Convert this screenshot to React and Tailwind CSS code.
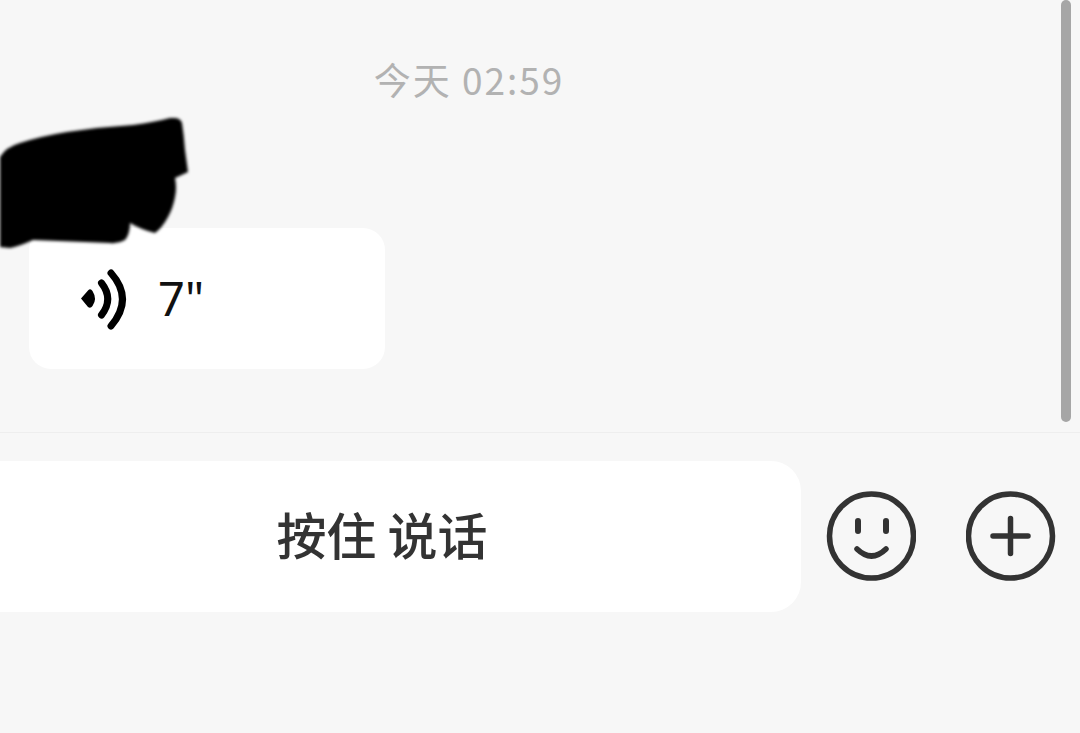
import React from "react";

const cjk = "font-['Noto_Sans_CJK_SC','Liberation_Sans',sans-serif]";

const VoiceIcon = () => (
  <svg width="48" height="62" viewBox="0 0 48 62" fill="none" className="shrink-0">
    <path d="M1 30.5 L8 22.5 Q10.5 20 12.5 23 Q17.5 31 12.5 38 Q10.5 41 8 39 Z" fill="#000" />
    <path d="M21.5 15 Q34 31 21.5 47" stroke="#000" strokeWidth="7" strokeLinecap="round" />
    <path d="M31 5 Q54 31 31 58" stroke="#000" strokeWidth="7" strokeLinecap="round" />
  </svg>
);

const SmileIcon = () => (
  <svg width="90" height="90" viewBox="0 0 90 90" fill="none">
    <circle cx="45.5" cy="45" r="42" stroke="#333" strokeWidth="5.5" />
    <path d="M32 30 V40 M60 30 V40" stroke="#333" strokeWidth="6" strokeLinecap="round" />
    <path d="M31 58 Q45.5 72 60 58" stroke="#333" strokeWidth="5.5" strokeLinecap="round" />
  </svg>
);

const PlusIcon = () => (
  <svg width="90" height="90" viewBox="0 0 90 90" fill="none">
    <circle cx="44.5" cy="45" r="42" stroke="#333" strokeWidth="5.5" />
    <path d="M44.5 27.5 V62.5 M27 45 H62" stroke="#333" strokeWidth="5.5" strokeLinecap="round" />
  </svg>
);

// black marker scribble covering the sender name
const Scribble = () => (
  <svg
    width="192"
    height="136"
    viewBox="0 0 192 136"
    className="absolute left-0 top-[118px] blur-[1.5px]"
  >
    <path
      d="M0 39 Q6 29 20 25 Q42 18 67 14 Q100 9 133 7 Q155 4 170 0 Q180 -1 182 5 Q184 18 185 32 L188 54 L175 60 Q177 70 175 79 Q173 90 168 99 Q162 110 155 115 Q142 112 130 105 Q130 116 125 122 Q118 126 110 125 L33 122 Q20 128 10 130 L0 129 Z"
      fill="#000"
    />
  </svg>
);

export default function App() {
  return (
    <div className={`relative h-[733px] w-[1080px] overflow-hidden bg-[#f7f7f7] ${cjk}`}>
      <div className="h-[433px] border-b border-[#eeeeee] pl-[29px] pt-[56px]">
        <p className="w-[880px] text-center text-[37px] leading-[46px] tracking-[2px] text-[#b2b2b2]">
          今天 02:59
        </p>
        <div className="mt-[126px] flex h-[141px] w-[356px] items-center gap-[30px] rounded-[22px] bg-white pl-[51px]">
          <VoiceIcon />
          <span className="font-['Noto_Sans',sans-serif] text-[47px] font-normal leading-none text-[#111]">7"</span>
        </div>
      </div>

      <div className="flex items-center pt-[28px]">
        <button className="ml-[-40px] flex h-[151px] w-[841px] items-center justify-center rounded-[30px] bg-white pb-[6px] pl-[3px] text-[50px] font-medium text-[#333]">
          按住 说话
        </button>
        <div className="ml-[25px] flex gap-[50px] pb-[2px]">
          <SmileIcon />
          <PlusIcon />
        </div>
      </div>

      <Scribble />
      <div className="absolute right-[9px] top-0 h-[422px] w-[10px] rounded-full bg-[#a6a6a6]" />
    </div>
  );
}
